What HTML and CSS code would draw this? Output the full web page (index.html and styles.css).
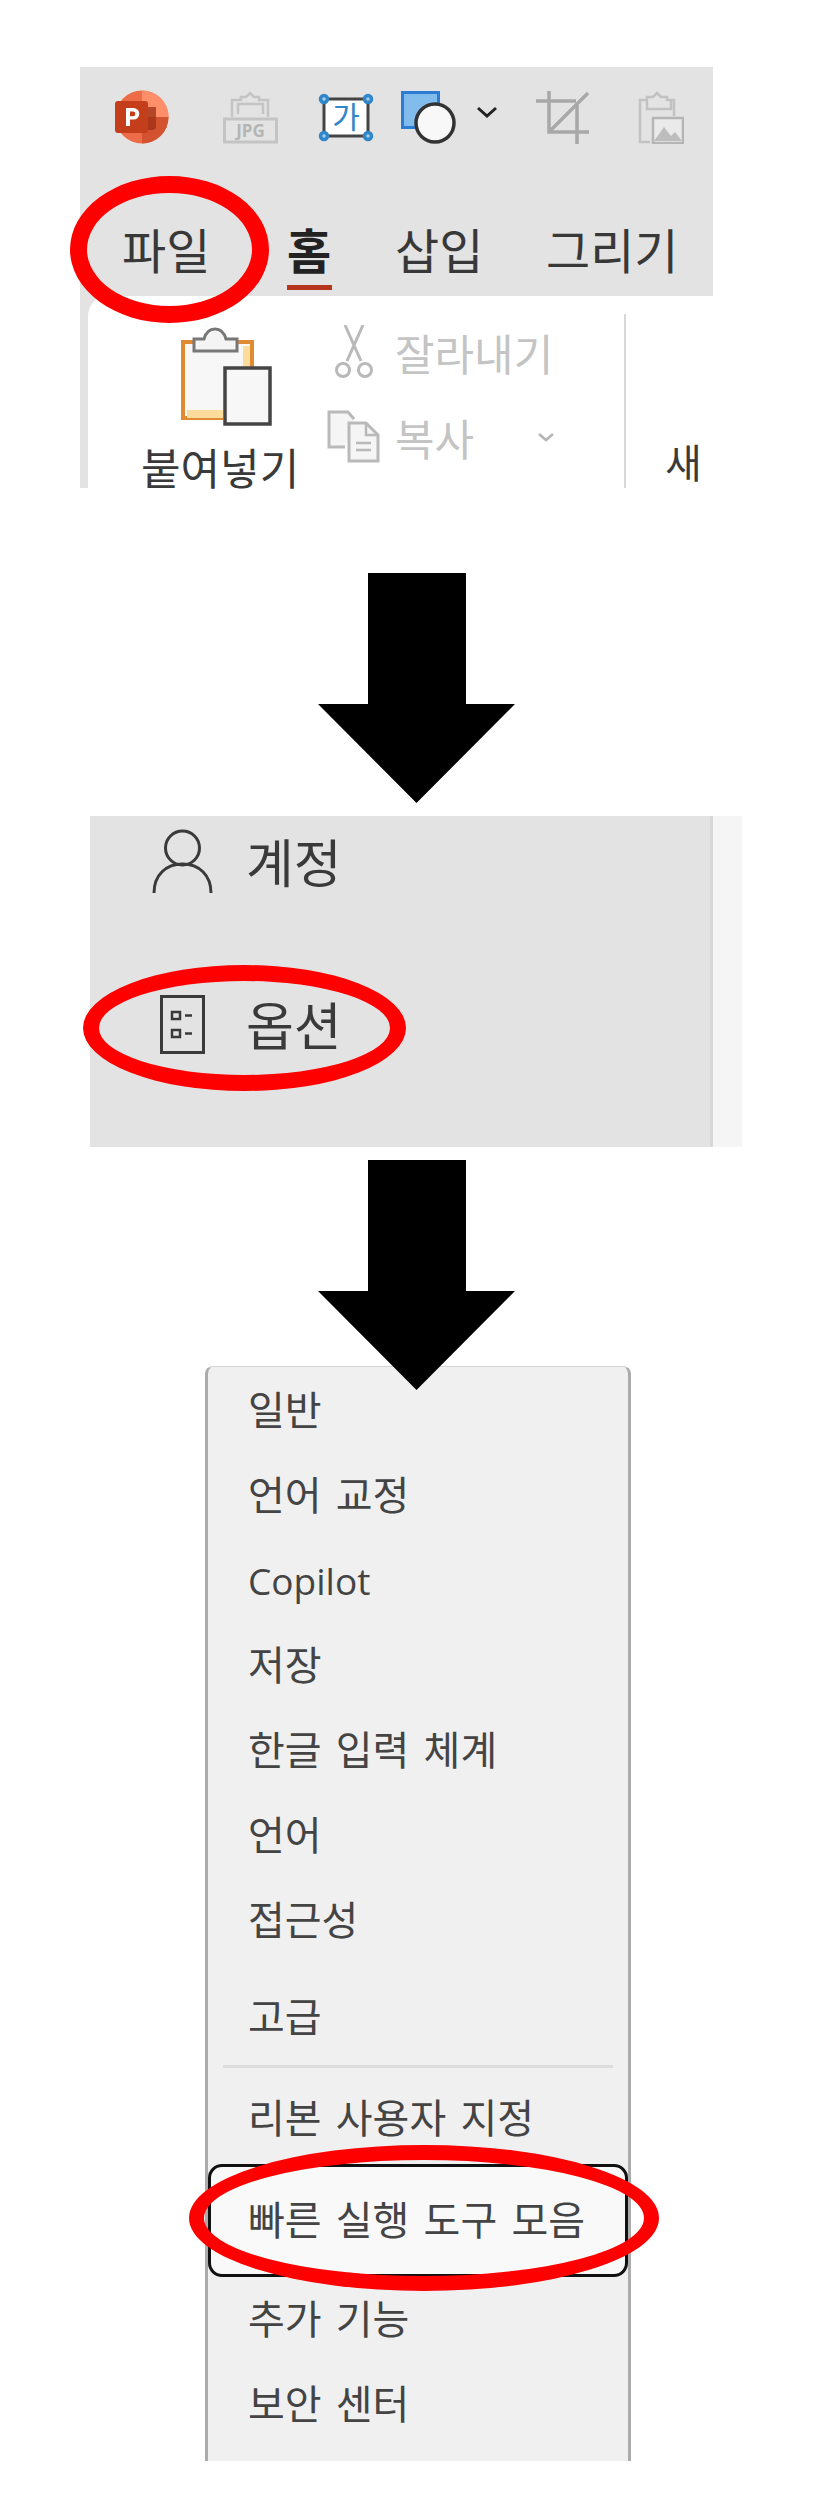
FILE: index.html
```html
<!DOCTYPE html>
<html lang="ko">
<head>
  <meta charset="UTF-8">
  <meta name="viewport" content="width=device-width, initial-scale=1.0">
  <title>빠른 실행 도구 모음</title>
  <link rel="stylesheet" href="styles.css">
</head>
<body>

  <!-- step 1: ribbon -->
  <section class="ribbon-shot">
    <div class="ribbon-top">
      <div class="quick-bar">
        <svg class="qa qa-ppt" width="54" height="54" viewBox="0 0 54 54">
          <circle cx="27" cy="27" r="26.5" fill="#ed6c47"/>
          <path d="M27 .5a26.5 26.5 0 0 1 26.5 26.5H27z" fill="#ff8f6b"/>
          <path d="M27 27h26.5A26.5 26.5 0 0 1 27 53.5z" fill="#d35230"/>
          <path d="M17 40h20a4 4 0 0 0 4-4V17H17z" fill="#9e2e12" opacity=".75"/>
          <rect x="0" y="11" width="33" height="32" rx="3" fill="#c43e1c"/>
          <path d="M11 36V18h7.5a5.8 5.8 0 0 1 0 11.6H15V36z" fill="#fff"/>
          <path d="M15 21.500v4.800h3a2.400 2.400 0 0 0 0-4.800z" fill="#c43e1c"/>
        </svg>
        <svg class="qa qa-jpg" width="55" height="53" viewBox="0 0 55 53">
          <path d="M9 26V9h9V6h5l4-4 4 4h5v3h9v17M15 23V13h25v10" fill="none" stroke="#c4c4c4" stroke-width="2.500"/>
          <rect x="1.500" y="28" width="52" height="23" fill="none" stroke="#c4c4c4" stroke-width="3"/>
          <text class="jpg-text" x="27.500" y="46">JPG</text>
        </svg>
        <svg class="qa qa-ga" width="56" height="49" viewBox="0 0 56 49">
          <rect x="6" y="6" width="44" height="37" fill="#fff" stroke="#444" stroke-width="3"/>
          <g fill="#a8cde8" stroke="#2f86c9" stroke-width="3.500">
            <circle cx="6" cy="6" r="3.500"/><circle cx="50" cy="6" r="3.500"/>
            <circle cx="6" cy="43" r="3.500"/><circle cx="50" cy="43" r="3.500"/>
          </g>
          <text class="ga-text" x="28" y="35">가</text>
        </svg>
        <svg class="qa qa-shape" width="55" height="53" viewBox="0 0 55 53">
          <path d="M1.500 1.500h36v17H26v18H1.500z" fill="#82bcec" stroke="#2b7cd3" stroke-width="3"/>
          <circle cx="34" cy="32" r="19" fill="#f8f8f8" stroke="#333" stroke-width="3.500"/>
        </svg>
        <svg class="qa qa-chev" width="22" height="12" viewBox="0 0 22 12">
          <path d="M2 2l9 8 9-8" fill="none" stroke="#222" stroke-width="3"/>
        </svg>
        <svg class="qa qa-crop" width="53" height="53" viewBox="0 0 53 53">
          <path d="M0 10h40M13 0v41h40M41 53V12M13 41L52 2" fill="none" stroke="#a8a8a8" stroke-width="3.500"/>
        </svg>
        <svg class="qa qa-pastepic" width="46" height="53" viewBox="0 0 46 53">
          <path d="M12 51H2V9h7V6h6l4-4 4 4h6v3h7v16M9 9v9h24V9" fill="none" stroke="#c2c2c2" stroke-width="2.500"/>
          <rect x="15" y="27" width="30" height="25" fill="#eaeaea" stroke="#b5b5b5" stroke-width="2.500"/>
          <path d="M16 50l10-14 7 9 4-4 7 9z" fill="#bdbdbd"/>
        </svg>
      </div>
      <div class="tabs">
        <span class="tab">파일</span>
        <span class="tab tab-active">홈</span>
        <span class="tab">삽입</span>
        <span class="tab">그리기</span>
      </div>
    </div>
    <div class="ribbon-body">
      <div class="paste-col">
        <svg class="paste-icon" width="91" height="99" viewBox="0 0 91 99">
          <path d="M42 91H2V15h69v27" fill="#f7f7f7" stroke="#e08a32" stroke-width="4"/>
          <path d="M6 83h36v8H6zM62 19h7v22h-7z" fill="#fbdc9c"/>
          <path d="M13 24V12h10C25 5 29 2 34 2s9 3 11 10h11v12z" fill="#f4f4f4" stroke="#777" stroke-width="3"/>
          <rect x="44" y="41" width="45" height="56" fill="#f7f7f7" stroke="#444" stroke-width="3.500"/>
        </svg>
        <span class="paste-label">붙여넣기</span>
      </div>
      <div class="clip-col">
        <div class="clip-row">
          <svg class="clip-icon" width="53" height="53" viewBox="0 0 53 53">
            <path d="M18 0l16 36M36 0L20 36" fill="none" stroke="#b9b9b9" stroke-width="3"/>
            <circle cx="16" cy="45" r="6.500" fill="none" stroke="#b9b9b9" stroke-width="3"/>
            <circle cx="38" cy="45" r="6.500" fill="none" stroke="#b9b9b9" stroke-width="3"/>
          </svg>
          <span>잘라내기</span>
        </div>
        <div class="clip-row">
          <svg class="clip-icon" width="53" height="53" viewBox="0 0 53 53">
            <path d="M18 37H2V2h19l6 7" fill="#f5f5f5" stroke="#b9b9b9" stroke-width="3"/>
            <path d="M22 13h17l12 12v26H22z" fill="#f5f5f5" stroke="#b9b9b9" stroke-width="3"/>
            <path d="M39 13v12h12M29 33h15M29 40h15" fill="none" stroke="#b9b9b9" stroke-width="2.500"/>
          </svg>
          <span>복사</span>
          <svg class="clip-chev" width="18" height="10" viewBox="0 0 18 10">
            <path d="M2 2l7 6 7-6" fill="none" stroke="#b5b5b5" stroke-width="2.500"/>
          </svg>
        </div>
      </div>
      <div class="ribbon-divider"></div>
      <span class="next-group">새</span>
    </div>
    <div class="ring ring-file"></div>
  </section>

  <svg class="arrow" width="197" height="230" viewBox="0 0 197 230">
    <path d="M50 0h98v131h49l-98.500 99L0 131h50z"/>
  </svg>

  <!-- step 2: backstage menu -->
  <section class="backstage-shot">
    <div class="backstage-menu">
      <div class="backstage-item item-account">
        <svg class="backstage-icon" width="61" height="64" viewBox="0 0 61 64">
          <circle cx="30.500" cy="19" r="17" fill="none" stroke="#3a3a3a" stroke-width="3"/>
          <path d="M2 64c0-18 12-29 28.500-29S59 46 59 64" fill="none" stroke="#3a3a3a" stroke-width="3"/>
        </svg>
        <span>계정</span>
      </div>
      <div class="backstage-item item-options">
        <svg class="backstage-icon" width="45" height="59" viewBox="0 0 45 59">
          <rect x="1.500" y="1.500" width="42" height="56" fill="none" stroke="#3a3a3a" stroke-width="3"/>
          <rect x="12" y="17" width="8" height="7" fill="none" stroke="#3a3a3a" stroke-width="2.500"/>
          <rect x="12" y="35" width="8" height="7" fill="none" stroke="#3a3a3a" stroke-width="2.500"/>
          <path d="M25 20.500h7M25 38.500h7" stroke="#3a3a3a" stroke-width="2.500"/>
        </svg>
        <span>옵션</span>
      </div>
    </div>
    <div class="backstage-side"></div>
    <div class="ring ring-options"></div>
  </section>

  <svg class="arrow arrow-over" width="197" height="230" viewBox="0 0 197 230">
    <path d="M50 0h98v131h49l-98.500 99L0 131h50z"/>
  </svg>

  <!-- step 3: options dialog list -->
  <section class="options-shot">
    <ul class="options-list">
      <li>일반</li>
      <li>언어 교정</li>
      <li class="latin">Copilot</li>
      <li>저장</li>
      <li>한글 입력 체계</li>
      <li>언어</li>
      <li>접근성</li>
      <li class="before-sep">고급</li>
      <li class="sep"></li>
      <li class="after-sep">리본 사용자 지정</li>
      <li class="selected">빠른 실행 도구 모음</li>
      <li>추가 기능</li>
      <li>보안 센터</li>
    </ul>
    <div class="ring ring-quick"></div>
  </section>

</body>
</html>
```

FILE: styles.css
```css
body {
  margin: 0;
  background: #fff;
  color: #333;
  font-family: "Noto Sans CJK KR", "Noto Sans", sans-serif;
}

/* red marker rings drawn over the screenshots */
.ring {
  position: absolute;
  box-sizing: border-box;
  border-style: solid;
  border-color: #fe0000;
  border-radius: 50%;
}

.arrow {
  display: block;
  margin-left: 318px;
  fill: #000;
}

/* step 1 */
.ribbon-shot {
  position: relative;
  width: 633px;
  height: 421px;
  margin: 67px 0 85px 80px;
  background: #e3e3e3;
}

.ribbon-top {
  height: 229px;
  box-sizing: border-box;
}

.quick-bar {
  display: flex;
  align-items: center;
  height: 100px;
  padding: 0 0 0 35px;
}

.qa-jpg { margin-left: 54px; }
.qa-ga { margin-left: 40px; }
.qa-shape { margin-left: 27px; }
.qa-chev { margin-left: 20px; margin-bottom: 10px; }
.qa-crop { margin-left: 38px; }
.qa-pastepic { margin-left: 49px; }

.jpg-text {
  font-family: "Open Sans", sans-serif;
  font-size: 17px;
  font-weight: 700;
  fill: #b5b5b5;
  text-anchor: middle;
}

.ga-text {
  font-size: 30px;
  fill: #2f86c9;
  text-anchor: middle;
}

.tabs {
  display: grid;
  grid-template-columns: 165px 108px 151px auto;
  padding: 0 0 0 42px;
  margin-top: 54px;
  font-size: 48px;
  line-height: 54px;
  color: #383838;
}

.tab-active {
  justify-self: start;
  font-weight: 700;
  color: #222;
  height: 64px;
  border-bottom: 5px solid #b5361c;
  width: 45px;
}

.ribbon-body {
  display: flex;
  box-sizing: border-box;
  height: 192px;
  margin-left: 8px;
  background: #fff;
  border-top-left-radius: 20px;
}

.paste-col {
  display: flex;
  flex-direction: column;
  width: 239px;
  padding: 31px 0 0 53px;
  box-sizing: border-box;
}

.paste-icon { margin-left: 40px; }

.paste-label {
  margin-top: 18px;
  font-size: 43px;
  line-height: 44px;
  white-space: nowrap;
  color: #3a3a3a;
}

.clip-col {
  display: flex;
  flex-direction: column;
  gap: 32px;
  width: 297px;
  padding-top: 29px;
  box-sizing: border-box;
}

.clip-row {
  display: flex;
  align-items: center;
  height: 53px;
  font-size: 43px;
  color: #c4c4c4;
}

.clip-icon { margin-right: 15px; }
.clip-chev { margin-left: 63px; }

.ribbon-divider {
  width: 2px;
  margin-top: 18px;
  background: #d9d9d9;
}

.next-group {
  margin: 140px 0 0 39px;
  font-size: 40px;
  line-height: 50px;
  color: #3a3a3a;
}

.ring-file {
  left: -10px;
  top: 109px;
  width: 199px;
  height: 147px;
  border-width: 17px;
}

/* step 2 */
.backstage-shot {
  position: relative;
  display: flex;
  width: 652px;
  height: 331px;
  margin: 13px 0 13px 90px;
}

.backstage-menu {
  flex: 1;
  background: #e3e3e3;
  border-right: 3px solid #d8d8d8;
}

.backstage-side {
  width: 29px;
  background: #f5f5f5;
}

.backstage-item {
  display: flex;
  align-items: center;
  font-size: 52px;
  line-height: 64px;
  color: #3a3a3a;
}

.item-account {
  margin-top: 13px;
  padding-left: 62px;
}

.item-options {
  margin-top: 99px;
  padding-left: 70px;
}

.item-account .backstage-icon { margin-right: 33px; }
.item-options .backstage-icon { margin-right: 41px; }

.ring-options {
  left: -7px;
  top: 149px;
  width: 323px;
  height: 126px;
  border-width: 16px;
}

/* step 3 */
.arrow-over {
  position: relative;
  z-index: 1;
  margin-bottom: -24px;
}

.options-shot {
  position: relative;
  width: 426px;
  height: 1095px;
  margin-left: 205px;
}

.options-list {
  box-sizing: border-box;
  height: 100%;
  margin: 0;
  padding: 1px 0 0;
  list-style: none;
  background: #f0f0f0;
  border-left: 3px solid #ababab;
  border-right: 3px solid #ababab;
  border-top: 1px solid #d4d4d4;
  border-radius: 8px 8px 0 0;
  font-size: 40px;
  word-spacing: 3px;
  color: #444;
}

.options-list li {
  height: 85px;
  padding-left: 40px;
  line-height: 80px;
}

.options-list .latin {
  font-family: "Open Sans", sans-serif;
  font-size: 37px;
  line-height: 85px;
}

.options-list .before-sep {
  margin-top: 12px;
}

.options-list .sep {
  height: 3px;
  margin: 5px 15px 8px;
  padding: 0;
  background: #dcdcdc;
}

.options-list .selected {
  box-sizing: border-box;
  height: 113px;
  margin: 3px 0 0;
  padding-left: 37px;
  line-height: 103px;
  background: #f9f9f9;
  border: 3px solid #111;
  border-radius: 14px;
}

.ring-quick {
  left: -16px;
  top: 779px;
  width: 470px;
  height: 146px;
  border-width: 15px;
}
```
